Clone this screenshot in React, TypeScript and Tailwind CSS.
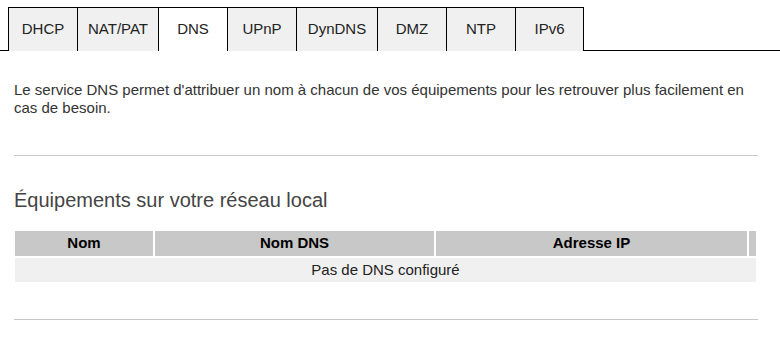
const tabs = [
  { label: 'DHCP', w: 'w-[69px]' },
  { label: 'NAT/PAT', w: 'w-[81px]' },
  { label: 'DNS', w: 'w-[69px]', active: true },
  { label: 'UPnP', w: 'w-[69px]' },
  { label: 'DynDNS', w: 'w-[81px]' },
  { label: 'DMZ', w: 'w-[69px]' },
  { label: 'NTP', w: 'w-[69px]' },
  { label: 'IPv6', w: 'w-[69px]' },
];

export default function App() {
  return (
    <div className="w-[780px] h-[345px] bg-white pt-[7px] font-['Liberation_Sans',Arial,sans-serif] text-[#222] overflow-hidden">
      {/* Onglets */}
      <div className="flex h-[44px]">
        <div className="w-[8px] border-b border-black" />
        {tabs.map((t) => (
          <div
            key={t.label}
            className={`${t.w} flex items-center justify-center border-t border-l border-black text-[15px] ${
              t.active ? 'bg-white' : 'bg-[#f0f0f0]'
            } ${t.label === 'IPv6' ? 'border-r' : ''}`}
          >
            {t.label}
          </div>
        ))}
        <div className="flex-1 border-b border-black" />
      </div>

      <div className="px-[14px] w-[772px]">
        <p className="mt-[30px] text-[15px] leading-[18px] text-[#333]">
          Le service DNS permet d'attribuer un nom à chacun de vos équipements pour les retrouver plus facilement en cas de besoin.
        </p>

        <div className="mt-[38px] h-px bg-[#c8c8c8]" />

        <h2 className="mt-[32px] text-[20px] leading-[24px] text-[#444]">Équipements sur votre réseau local</h2>

        <table className="mt-[17px] -ml-px w-[745px] table-fixed border-separate border-spacing-[2px] text-[15px]">
          <colgroup>
            <col className="w-[138px]" />
            <col className="w-[279px]" />
            <col className="w-[311px]" />
            <col className="w-[7px]" />
          </colgroup>
          <thead>
            <tr className="h-[25px]">
              <th className="bg-[#c8c8c8] font-bold text-black p-0">Nom</th>
              <th className="bg-[#c8c8c8] font-bold text-black p-0">Nom DNS</th>
              <th className="bg-[#c8c8c8] font-bold text-black p-0">Adresse IP</th>
              <th className="bg-[#c8c8c8] p-0" />
            </tr>
          </thead>
          <tbody>
            <tr className="h-[24px]">
              <td colSpan={4} className="bg-[#f0f0f0] text-center p-0 text-[#222]">
                Pas de DNS configuré
              </td>
            </tr>
          </tbody>
        </table>

        <div className="mt-[35px] h-px bg-[#c8c8c8]" />
      </div>
    </div>
  );
}
